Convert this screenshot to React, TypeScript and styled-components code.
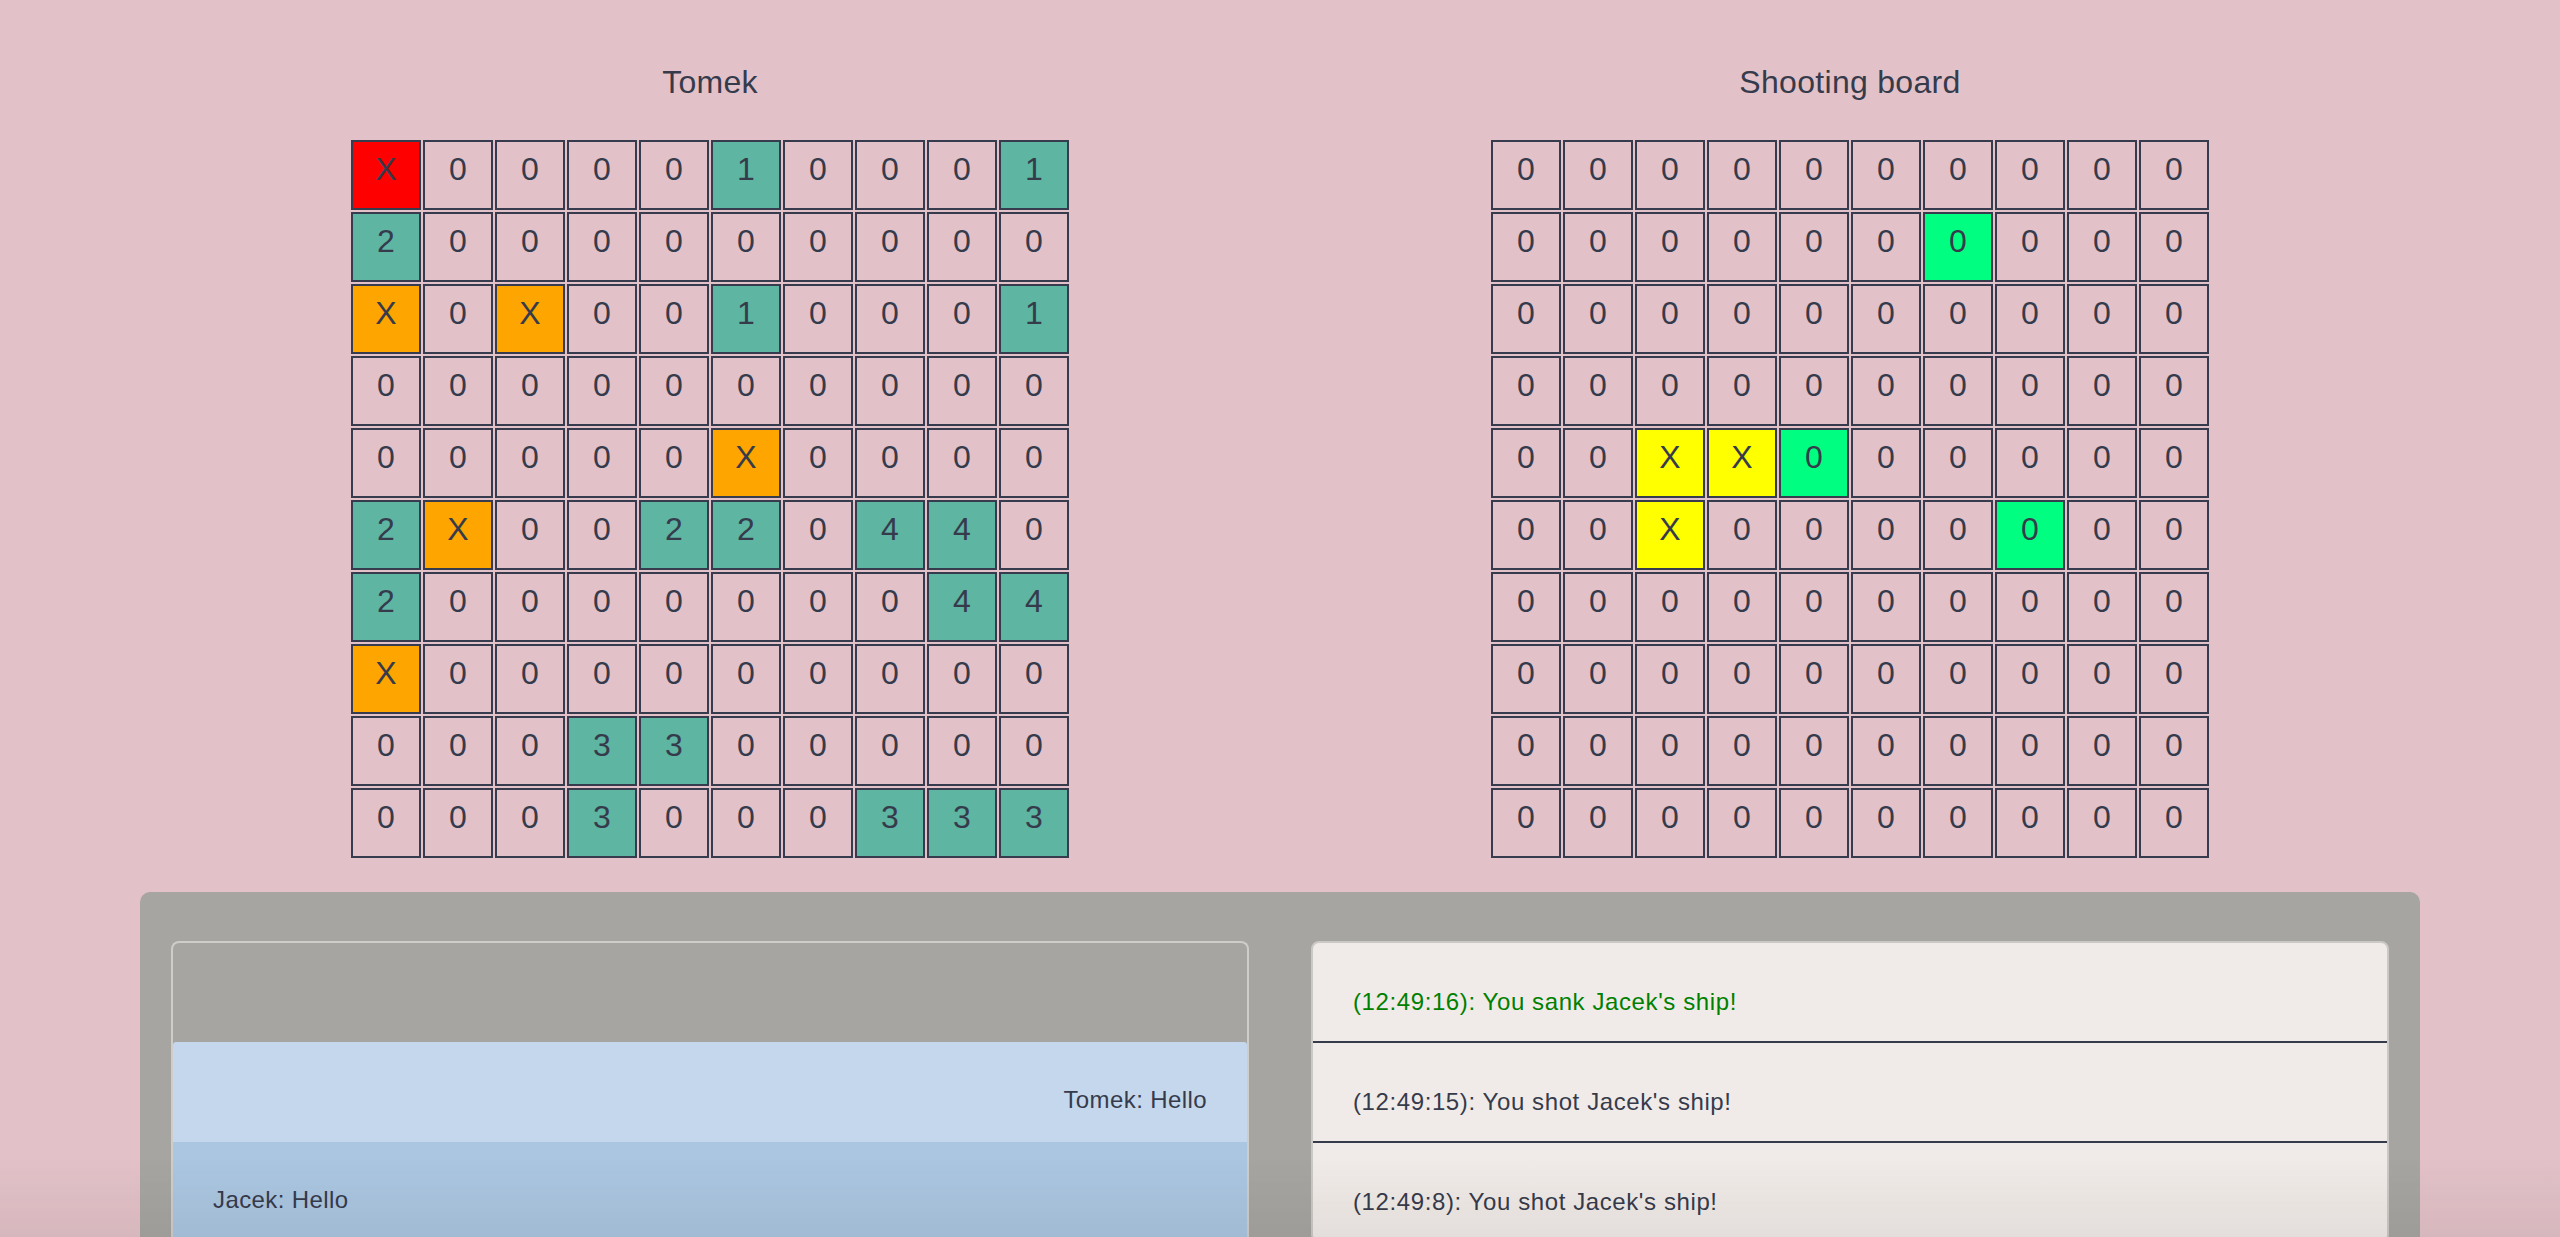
import * as React from "react";
import styled, { createGlobalStyle } from "styled-components";

const GlobalStyle = createGlobalStyle`
  html, body {
    margin: 0;
    padding: 0;
    background: #e2c2c8;
  }

  body {
    font-family: "Liberation Sans", Arial, Helvetica, sans-serif;
    color: #363b4c;
  }
`;

const Page = styled.main`
  width: 2280px;
  margin: 0 auto;
`;

const Boards = styled.section`
  display: grid;
  grid-template-columns: 1fr 1fr;
  padding-top: 62px;
`;

const BoardColumn = styled.div`
  display: flex;
  flex-direction: column;
  align-items: center;
`;

const BoardTitle = styled.h2`
  margin: 0 0 38px;
  font-size: 32px;
  font-weight: 400;
  line-height: 40px;
  letter-spacing: 0.3px;
  color: #363b4c;
`;

const Grid = styled.div`
  display: grid;
  grid-template-columns: repeat(10, 70px);
  grid-auto-rows: 70px;
  gap: 2px;
`;

const tones: Record<string, string> = {
  r: "#ff0000",
  o: "#ffa500",
  t: "#5db5a2",
  y: "#ffff00",
  g: "#00ff80",
};

const Cell = styled.div<{ $tone?: string }>`
  box-sizing: border-box;
  border: 2px solid #363b4d;
  background: ${(p) => (p.$tone ? tones[p.$tone] : "transparent")};
  font-size: 32px;
  line-height: 54px;
  text-align: center;
  color: #363b4c;
`;

const Panel = styled.section`
  margin-top: 34px;
  padding: 49px 31px 40px;
  background: #a6a5a1;
  border-radius: 10px;
  display: grid;
  grid-template-columns: 1fr 1fr;
  gap: 62px;
  align-items: start;
`;

const ChatCard = styled.div`
  border: 2px solid #cfcdca;
  border-bottom: none;
  border-radius: 8px 8px 0 0;
  padding-top: 99px;
  overflow: hidden;
`;

const Message = styled.div<{ $mine?: boolean }>`
  height: 100px;
  box-sizing: border-box;
  padding: 46px 40px 30px;
  font-size: 24px;
  line-height: 24px;
  letter-spacing: 0.4px;
  text-align: ${(p) => (p.$mine ? "right" : "left")};
  background: ${(p) => (p.$mine ? "#c5d7ec" : "#aac6e1")};
  border-radius: ${(p) => (p.$mine ? "3px 3px 0 0" : "0")};
`;

const LogCard = styled.ul`
  margin: 0;
  padding: 0;
  list-style: none;
  background: #f0ebe8;
  border: 2px solid #cbc9c6;
  border-radius: 8px;
  overflow: hidden;
`;

const LogEntry = styled.li<{ $sunk?: boolean }>`
  height: 24px;
  padding: 47px 40px 27px;
  font-size: 24px;
  line-height: 24px;
  letter-spacing: 0.6px;
  color: ${(p) => (p.$sunk ? "#008000" : "#363b4c")};
  border-bottom: 2px solid #363b4c;

  &:last-child {
    border-bottom: none;
  }
`;

const WindowShade = styled.div`
  position: fixed;
  left: 0;
  right: 0;
  bottom: 0;
  height: 80px;
  pointer-events: none;
  background: linear-gradient(to bottom, rgba(40, 20, 20, 0), rgba(40, 20, 20, 0.06));
`;

const playerBoard = [
  "Xr 0 0 0 0 1t 0 0 0 1t",
  "2t 0 0 0 0 0 0 0 0 0",
  "Xo 0 Xo 0 0 1t 0 0 0 1t",
  "0 0 0 0 0 0 0 0 0 0",
  "0 0 0 0 0 Xo 0 0 0 0",
  "2t Xo 0 0 2t 2t 0 4t 4t 0",
  "2t 0 0 0 0 0 0 0 4t 4t",
  "Xo 0 0 0 0 0 0 0 0 0",
  "0 0 0 3t 3t 0 0 0 0 0",
  "0 0 0 3t 0 0 0 3t 3t 3t",
];

const shootingBoard = [
  "0 0 0 0 0 0 0 0 0 0",
  "0 0 0 0 0 0 0g 0 0 0",
  "0 0 0 0 0 0 0 0 0 0",
  "0 0 0 0 0 0 0 0 0 0",
  "0 0 Xy Xy 0g 0 0 0 0 0",
  "0 0 Xy 0 0 0 0 0g 0 0",
  "0 0 0 0 0 0 0 0 0 0",
  "0 0 0 0 0 0 0 0 0 0",
  "0 0 0 0 0 0 0 0 0 0",
  "0 0 0 0 0 0 0 0 0 0",
];

const messages = [
  { author: "Tomek", text: "Hello", mine: true },
  { author: "Jacek", text: "Hello", mine: false },
];

const log = [
  { time: "12:49:16", text: "You sank Jacek's ship!", sunk: true },
  { time: "12:49:15", text: "You shot Jacek's ship!", sunk: false },
  { time: "12:49:8", text: "You shot Jacek's ship!", sunk: false },
];

function Board({ title, rows }: { title: string; rows: string[] }) {
  return (
    <BoardColumn>
      <BoardTitle>{title}</BoardTitle>
      <Grid>
        {rows.map((row, r) =>
          row.split(" ").map((token, c) => (
            <Cell key={`${r}-${c}`} $tone={token[1]}>
              {token[0]}
            </Cell>
          ))
        )}
      </Grid>
    </BoardColumn>
  );
}

export default function App() {
  return (
    <>
      <GlobalStyle />
      <Page>
        <Boards>
          <Board title="Tomek" rows={playerBoard} />
          <Board title="Shooting board" rows={shootingBoard} />
        </Boards>
        <Panel>
          <ChatCard>
            {messages.map((m, i) => (
              <Message key={i} $mine={m.mine}>
                {m.author}: {m.text}
              </Message>
            ))}
          </ChatCard>
          <LogCard>
            {log.map((entry, i) => (
              <LogEntry key={i} $sunk={entry.sunk}>
                ({entry.time}): {entry.text}
              </LogEntry>
            ))}
          </LogCard>
        </Panel>
      </Page>
      <WindowShade />
    </>
  );
}
